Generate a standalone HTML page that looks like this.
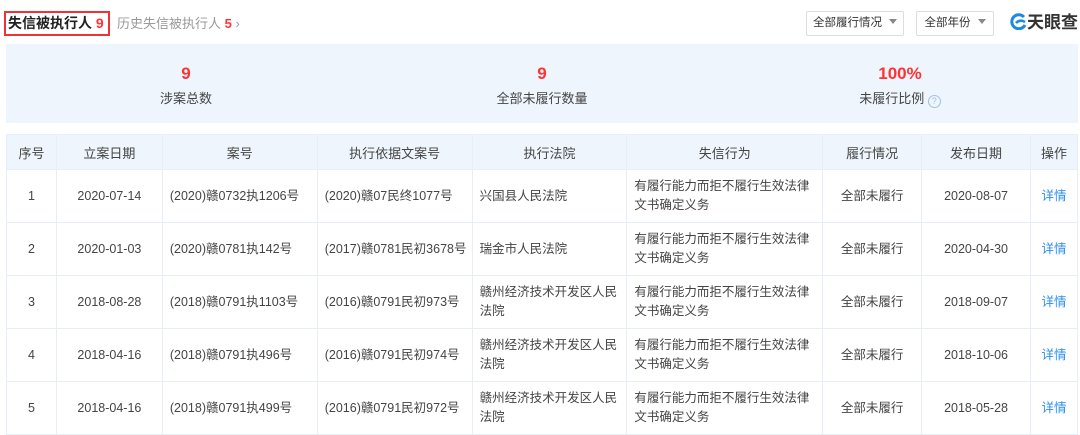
<!DOCTYPE html>
<html><head><meta charset="utf-8"><style>
*{margin:0;padding:0;box-sizing:border-box}
body{width:1080px;height:427px;overflow:hidden;background:#fff;font-family:"Liberation Sans","Noto Sans CJK SC",sans-serif;color:#333;position:relative}
.abs{position:absolute;white-space:nowrap}
.title{left:4px;top:11px;width:106px;height:25px;border:2px solid #e33;font-size:14px;font-weight:bold;line-height:21px;padding-left:2px;color:#222}
.title span{color:#f33}
.hist{left:117px;top:14px;font-size:13px;color:#999;line-height:20px}
.hist span{color:#f33;font-weight:bold}
.dd{top:11px;height:25px;border:1px solid #ddd;border-radius:2px;font-size:11.5px;line-height:23px;color:#333;text-align:center}
.dd i{display:inline-block;width:0;height:0;border-left:4px solid transparent;border-right:4px solid transparent;border-top:5px solid #888;margin-left:7px;vertical-align:2px}
.logo{left:1010px;top:12px;font-size:17px;font-weight:bold;color:#333;line-height:22px}
.sum{left:6px;top:44px;width:1072px;height:79px;background:#eef5fc}
.sc{position:absolute;top:0;width:360px;text-align:center}
.sc b{display:block;margin-top:19px;font-size:17px;color:#f33;line-height:22px}
.sc div{font-size:13px;color:#444;line-height:20px;margin-top:4px}
table{position:absolute;left:6px;top:134px;border-collapse:collapse;width:1072px;font-size:12.5px;color:#444}
td,th{border:1px solid #e8eef5;text-align:center;font-weight:normal}
th{background:#eef5fc;height:35px;font-size:13px}
td{height:53px;line-height:19px}
td.l{text-align:left;padding-left:7px}
td.w{padding-right:12px}
td a{color:#2b8ef0}
</style></head><body>
<div class="abs title">失信被执行人 <span>9</span></div>
<div class="abs hist">历史失信被执行人 <span>5</span> <span style="color:#999;font-weight:normal">›</span></div>
<div class="abs dd" style="left:806px;width:98px">全部履行情况<i></i></div>
<div class="abs dd" style="left:916px;width:78px">全部年份<i></i></div>
<div class="abs logo"><svg width="17" height="17" viewBox="0 0 17 17" style="vertical-align:-2px"><path d="M14 4A7 7 0 1 0 15 12" fill="none" stroke="#1e88e5" stroke-width="3"/><path d="M6 10Q10 6 15 9" fill="none" stroke="#1e88e5" stroke-width="2.5"/></svg>天眼查</div>
<div class="abs sum">
<div class="sc" style="left:0"><b>9</b><div>涉案总数</div></div>
<div class="sc" style="left:356px"><b>9</b><div>全部未履行数量</div></div>
<div class="sc" style="left:714px"><b>100%</b><div>未履行比例 <span style="display:inline-block;width:13px;height:13px;border:1px solid #9cc3e8;border-radius:50%;font-size:9px;line-height:11px;color:#9cc3e8;vertical-align:-1px">?</span></div></div>
</div>
<table>
<colgroup><col style="width:50px"><col style="width:106px"><col style="width:155px"><col style="width:155px"><col style="width:155px"><col style="width:196px"><col style="width:99px"><col style="width:109px"><col style="width:47px"></colgroup>
<tr><th>序号</th><th>立案日期</th><th>案号</th><th>执行依据文案号</th><th>执行法院</th><th>失信行为</th><th>履行情况</th><th>发布日期</th><th>操作</th></tr>
<tr><td>1</td><td>2020-07-14</td><td class="l">(2020)赣0732执1206号</td><td class="l">(2020)赣07民终1077号</td><td class="l">兴国县人民法院</td><td class="l w">有履行能力而拒不履行生效法律文书确定义务</td><td>全部未履行</td><td>2020-08-07</td><td><a>详情</a></td></tr>
<tr><td>2</td><td>2020-01-03</td><td class="l">(2020)赣0781执142号</td><td class="l">(2017)赣0781民初3678号</td><td class="l">瑞金市人民法院</td><td class="l w">有履行能力而拒不履行生效法律文书确定义务</td><td>全部未履行</td><td>2020-04-30</td><td><a>详情</a></td></tr>
<tr><td>3</td><td>2018-08-28</td><td class="l">(2018)赣0791执1103号</td><td class="l">(2016)赣0791民初973号</td><td class="l">赣州经济技术开发区人民法院</td><td class="l w">有履行能力而拒不履行生效法律文书确定义务</td><td>全部未履行</td><td>2018-09-07</td><td><a>详情</a></td></tr>
<tr><td>4</td><td>2018-04-16</td><td class="l">(2018)赣0791执496号</td><td class="l">(2016)赣0791民初974号</td><td class="l">赣州经济技术开发区人民法院</td><td class="l w">有履行能力而拒不履行生效法律文书确定义务</td><td>全部未履行</td><td>2018-10-06</td><td><a>详情</a></td></tr>
<tr><td>5</td><td>2018-04-16</td><td class="l">(2018)赣0791执499号</td><td class="l">(2016)赣0791民初972号</td><td class="l">赣州经济技术开发区人民法院</td><td class="l w">有履行能力而拒不履行生效法律文书确定义务</td><td>全部未履行</td><td>2018-05-28</td><td><a>详情</a></td></tr>
</table>
</body></html>
